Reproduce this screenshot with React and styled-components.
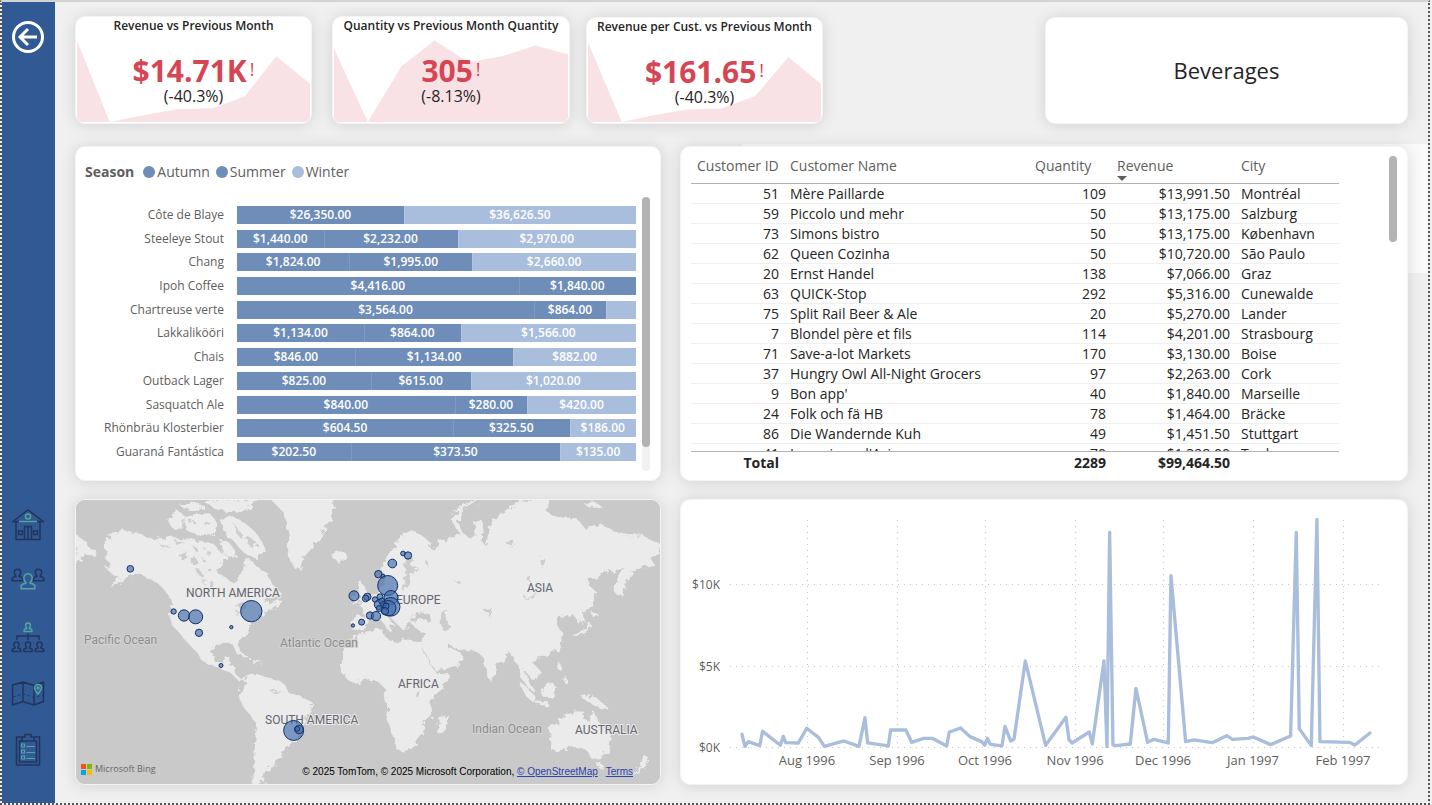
import React from "react";
import styled, { createGlobalStyle } from "styled-components";

const GlobalStyle = createGlobalStyle`
  *, *::before, *::after { box-sizing: border-box; }
  body { margin: 0; background: #f0f0f0; color: #252423; font-family: "Open Sans", "Noto Sans", sans-serif; }
`;

const Page = styled.div`
  display: flex;
  min-height: 100vh;
  border-right: 2px solid #f0f0f0;
`;
const Frame = styled.div`
  display: flex;
  flex: 1;
  min-width: 0;
  border: 2px dotted #555;
  border-top: 2px solid #d3d5d4;
`;
const Sidebar = styled.nav`
  width: 53px;
  flex: none;
  display: flex;
  flex-direction: column;
  justify-content: space-between;
  align-items: center;
  padding: 18px 2px 36px 0;
  background: #315a94;
`;
const NavGroup = styled.div`
  display: flex;
  flex-direction: column;
  gap: 22px;
`;
const IconButton = styled.button`
  display: block;
  width: 34px;
  height: 34px;
  padding: 0;
  border: 0;
  background: none;
  cursor: pointer;
  svg { display: block; width: 34px; height: 34px; }
`;
const Main = styled.main`
  flex: 1;
  min-width: 0;
  display: flex;
  flex-direction: column;
  padding: 14px 20px 18px;
  background: linear-gradient(#fafafa, #fafafa) right 0 top 142px / 50% 129px no-repeat;
`;
const TopRow = styled.section`
  display: grid;
  grid-template-columns: 237fr 20px 238fr 16px 237fr 222fr 363fr;
  height: 108px;
  margin-bottom: 22px;
`;
const Panels = styled.section`
  flex: 1;
  display: grid;
  grid-template-columns: 586fr 728fr;
  grid-template-rows: auto minmax(286px, 1fr);
  gap: 18px 19px;
`;
const Card = styled.article`
  position: relative;
  min-width: 0;
  overflow: hidden;
  background: #fff;
  border: 1px solid #f4f4f4;
  border-radius: 10px;
  box-shadow: 0 1px 16px rgba(0, 0, 0, 0.13);
`;

/* KPI cards */
const KpiCard = styled(Card)`
  grid-column: ${(p) => p.$column};
  margin-top: ${(p) => (p.$low ? "1px" : "0")};
  text-align: center;
`;
const Spark = styled.svg`
  position: absolute;
  inset: 0;
  width: 100%;
  height: 100%;
`;
const KpiBody = styled.div`
  position: relative;
`;
const KpiTitle = styled.h2`
  margin: 0;
  font-size: 12px;
  line-height: 18px;
  font-weight: 600;
  white-space: nowrap;
`;
const KpiValue = styled.div`
  display: flex;
  justify-content: center;
  margin-top: 18px;
  font-size: 30px;
  line-height: 36px;
  font-weight: 700;
  color: #d64554;
`;
const KpiFlag = styled.span`
  margin-left: 3px;
  font-size: 18px;
  line-height: 32px;
  font-weight: 400;
`;
const KpiDelta = styled.div`
  margin-top: -3px;
  font-size: 16px;
  line-height: 20px;
`;
const CategoryCard = styled(Card)`
  grid-column: 7;
  margin-top: 1px;
  padding-bottom: 2px;
  display: flex;
  align-items: center;
  justify-content: center;
  font-size: 22px;
  line-height: 32px;
`;

/* Stacked bars */
const BarCard = styled(Card)`
  padding: 14px 10px 9px 9px;
`;
const Legend = styled.ul`
  display: flex;
  align-items: center;
  gap: 6px;
  margin: 0 0 14px;
  padding: 0;
  list-style: none;
  font-size: 14px;
  line-height: 22px;
  color: #605e5c;
`;
const LegendTitle = styled.li`
  font-weight: 700;
  margin-right: 3px;
`;
const LegendItem = styled.li`
  display: flex;
  align-items: center;
  gap: 2px;
  &::before {
    content: "";
    width: 12px;
    height: 12px;
    border-radius: 50%;
    background: ${(p) => p.$color};
  }
`;
const BarBody = styled.div`
  display: flex;
  gap: 6px;
  height: 274px;
`;
const BarList = styled.div`
  flex: 1;
  min-width: 0;
  display: flex;
  flex-direction: column;
  justify-content: space-between;
  padding: 9px 0 10px;
`;
const BarRow = styled.div`
  display: flex;
  gap: 13px;
  height: 18px;
  line-height: 18px;
`;
const BarLabel = styled.span`
  width: 139px;
  flex: none;
  text-align: right;
  font-size: 12px;
  white-space: nowrap;
  color: #605e5c;
`;
const BarTrack = styled.div`
  flex: 1;
  min-width: 0;
  display: flex;
`;
const Segment = styled.span`
  flex-basis: 0;
  min-width: 0;
  overflow: hidden;
  text-align: center;
  font-size: 12px;
  font-weight: 600;
  color: #fff;
  background: ${(p) => p.$color};
  & + & { box-shadow: inset 1px 0 0 rgba(255, 255, 255, 0.12); }
`;
const ScrollTrack = styled.div`
  width: 8px;
  flex: none;
  border-radius: 4px;
  background: ${(p) => (p.$plain ? "transparent" : "#f2f2f2")};
`;
const ScrollThumb = styled.div`
  height: ${(p) => p.$size}px;
  border-radius: 4px;
  background: #b3b3b3;
`;

/* Table */
const TableCard = styled(Card)`
  display: flex;
  gap: 50px;
  padding: 9px 10px 6px;
`;
const TableArea = styled.div`
  flex: 1;
  min-width: 0;
`;
const TableView = styled.div`
  height: 295px;
  overflow: hidden;
`;
const Table = styled.table`
  width: 100%;
  table-layout: fixed;
  border-collapse: separate;
  border-spacing: 0;
  font-size: 14px;
  line-height: 19px;
  white-space: nowrap;
`;
const Col = styled.col`
  width: ${(p) => p.$width};
`;
const HeadCell = styled.th`
  position: relative;
  height: 28px;
  padding: 0 5px 0 6px;
  vertical-align: top;
  text-align: left;
  font-weight: 400;
  color: #605e5c;
  border-bottom: 1px solid #b3b3b3;
  &[aria-sort]::after {
    content: "";
    position: absolute;
    left: 6px;
    top: 20px;
    border: 5px solid transparent;
    border-top-color: #605e5c;
    border-bottom: 0;
  }
`;
const Cell = styled.td`
  height: 20px;
  padding: 1px 5px 0 6px;
  line-height: 18px;
  text-align: ${(p) => (p.$num ? "right" : "left")};
  border-bottom: 1px solid #f0f0f0;
`;
const FootCell = styled.td`
  height: 23px;
  padding: 0 5px 2px 6px;
  text-align: right;
  font-weight: 700;
  border-top: 1px solid #b3b3b3;
`;

/* Map */
const MapCard = styled(Card)`
  background: #c9c9c9;
`;
const Drawing = styled.svg`
  position: absolute;
  inset: 0;
  width: 100%;
  height: 100%;
`;
const MapLabel = styled.text`
  font: 12px Roboto, sans-serif;
  fill: ${(p) => (p.$ocean ? "#8c8c8c" : "#65656f")};
  stroke: ${(p) => (p.$ocean ? "#d3d3d3" : "#ebebeb")};
  stroke-width: 2px;
  paint-order: stroke;
`;
const MapFooter = styled.footer`
  position: absolute;
  left: 5px;
  right: 27px;
  bottom: 5px;
  display: flex;
  align-items: flex-end;
  justify-content: space-between;
`;
const Bing = styled.span`
  display: flex;
  align-items: center;
  gap: 3px;
  font-size: 9px;
  line-height: 20px;
  color: #666;
`;
const Credits = styled.span`
  font: 10px/14px "Liberation Sans", Arial, sans-serif;
  color: #000;
  a { color: #2b43a8; }
  a + a { margin-left: 8px; }
`;

/* Line chart */
const Axis = styled.text`
  font: ${(p) => (p.$small ? "12px" : "13px")} "Open Sans", sans-serif;
  fill: #605e5c;
  text-anchor: ${(p) => p.$anchor};
`;

const dark = "#6f8db9";
const light = "#a9bddc";

const kpis = [
  { title: "Revenue vs Previous Month", value: "$14.71K", delta: "(-40.3%)", column: 1, spark: "1,24 34,107 68,100 102,94 138,93 170,81 202,40 236,68" },
  { title: "Quantity vs Previous Month Quantity", value: "305", delta: "(-8.13%)", column: 3, spark: "1,32 35,107 69,50 102,24 136,46 170,40 203,29 236,38" },
  { title: "Revenue per Cust. vs Previous Month", value: "$161.65", delta: "(-40.3%)", column: 5, low: true, spark: "1,25 35,107 67,100 101,94 136,93 170,80 203,40 236,68" },
];

const bars = [
  ["Côte de Blaye", 26350, 0, 36626.5],
  ["Steeleye Stout", 1440, 2232, 2970],
  ["Chang", 1824, 1995, 2660],
  ["Ipoh Coffee", 4416, 1840, 0],
  ["Chartreuse verte", 3564, 864, 360],
  ["Lakkalikööri", 1134, 864, 1566],
  ["Chais", 846, 1134, 882],
  ["Outback Lager", 825, 615, 1020],
  ["Sasquatch Ale", 840, 280, 420],
  ["Rhönbräu Klosterbier", 604.5, 325.5, 186],
  ["Guaraná Fantástica", 202.5, 373.5, 135],
];

const customers = [
  [51, "Mère Paillarde", 109, 13991.5, "Montréal"],
  [59, "Piccolo und mehr", 50, 13175, "Salzburg"],
  [73, "Simons bistro", 50, 13175, "København"],
  [62, "Queen Cozinha", 50, 10720, "São Paulo"],
  [20, "Ernst Handel", 138, 7066, "Graz"],
  [63, "QUICK-Stop", 292, 5316, "Cunewalde"],
  [75, "Split Rail Beer & Ale", 20, 5270, "Lander"],
  [7, "Blondel père et fils", 114, 4201, "Strasbourg"],
  [71, "Save-a-lot Markets", 170, 3130, "Boise"],
  [37, "Hungry Owl All-Night Grocers", 97, 2263, "Cork"],
  [9, "Bon app'", 40, 1840, "Marseille"],
  [24, "Folk och fä HB", 78, 1464, "Bräcke"],
  [86, "Die Wandernde Kuh", 49, 1451.5, "Stuttgart"],
  [41, "La maison d'Asie", 70, 1328, "Toulouse"],
];

const money = (n) => "$" + n.toLocaleString("en-US", { minimumFractionDigits: 2, maximumFractionDigits: 2 });

/* Land outlines, drawn at three times the map's size */
const westLand = [
  "105,160 130,135 165,125 205,132 250,150 275,150 300,140 330,155 360,150 400,160 430,165 450,190 470,200 445,225 443,255 465,265 490,285 505,275 520,250 525,215 545,215 560,235 590,250 605,285 630,310 620,320 590,322 575,335 600,340 635,335 620,350 590,360 575,372 560,390 540,405 530,425 520,440 500,455 505,470 510,490 500,488 490,462 465,460 440,462 428,475 426,500 435,520 455,522 470,505 480,505 475,530 495,535 495,555 510,568 530,562 525,572 505,570 485,550 465,540 445,532 420,525 395,510 385,490 365,470 345,448 330,430 312,410 300,385 305,365 310,345 300,320 285,300 270,285 240,265 215,255 195,250 170,262 150,275 125,290 150,262 125,250 108,235 125,222 105,205 120,190 103,175",
  "300,95 305,72 325,68 342,80 338,105 312,118",
  "345,85 380,75 425,80 440,105 425,135 390,135 350,120",
  "455,95 480,80 520,100 545,120 570,150 585,180 560,205 535,195 515,180 490,150 470,140",
  "330,45 360,38 400,48 380,60 345,58",
  "410,42 440,32 500,32 560,34 535,55 500,68 450,62",
  "450,150 480,165 500,195 480,200 455,185",
  "605,30 798,30 785,60 790,80 770,110 745,150 720,180 700,200 688,235 675,235 660,210 655,170 660,140 650,100 635,60",
  "790,200 805,190 828,192 825,205 805,215 793,208",
  "530,560 545,555 580,562 600,570 625,575 645,590 655,612 690,622 725,640 722,660 705,680 700,710 690,735 665,755 650,770 635,800 615,810 610,830 585,840 580,860 570,890 550,890 550,850 555,800 558,750 560,700 545,680 525,655 510,630 515,610 530,590",
  "18,140 45,155 60,180 80,185 75,200 45,190 30,215 18,225",
  "500,490 515,492 532,502 520,500",
  "545,514 570,514 565,521 548,520",
];
const eastLand = [
  "-10,440 20,428 60,420 70,425 72,440 90,455 120,460 130,450 160,455 180,458 185,480 200,510 215,535 230,555 265,555 262,570 235,610 215,630 210,650 212,680 190,705 188,730 165,760 140,782 115,782 105,755 95,720 80,685 85,650 70,615 75,595 60,580 45,570 20,568 0,572 -10,580 -30,575 -48,555 -55,530 -50,500 -40,475 -22,455",
  "260,675 262,690 248,728 235,730 232,705 245,690",
  "-22,418 -20,385 15,383 10,355 0,348 30,335 45,320 60,310 62,290 75,285 72,258 65,235 80,215 95,190 110,160 130,135 160,125 185,140 215,165 210,180 225,185 240,155 270,150 300,130 285,110 275,90 300,50 350,35 310,60 290,95 305,130 330,150 345,140 345,100 360,90 370,120 365,160 380,175 385,140 400,90 430,70 470,40 520,25 560,25 560,70 600,85 650,90 680,125 720,105 750,120 800,140 850,140 900,165 900,195 870,200 880,225 850,230 820,245 800,270 790,300 775,320 765,300 775,265 800,235 760,240 720,255 690,270 680,285 705,305 700,345 680,360 665,370 672,395 655,400 645,375 620,375 600,385 585,400 605,430 600,470 580,490 545,500 525,505 515,520 540,545 535,565 515,570 500,545 490,540 500,575 520,600 510,600 490,570 480,530 465,515 450,480 430,505 410,530 405,560 392,572 380,540 370,500 350,485 310,480 285,475 260,455 255,470 300,490 305,500 290,525 235,545 225,540 200,495 180,460 195,440 195,425 165,415 155,400 170,390 215,395 210,370 185,365 160,375 145,400 130,420 110,400 90,380 75,375 100,405 85,420 65,390 45,385 20,395 5,420",
  "0,275 10,290 20,310 35,330 30,345 0,345 5,325 -5,300",
  "-22,320 -5,315 -8,335 -25,338",
  "480,580 500,595 525,625 520,635 500,620",
  "528,638 565,640 565,646 530,644",
  "545,600 575,580 585,590 575,620 550,620",
  "665,622 700,622 725,640 738,652 715,650 690,640",
  "595,520 602,525 605,545 598,540",
  "610,570 620,565 618,580",
  "690,400 695,415 660,430 640,440 650,430 680,420",
  "700,370 715,375 700,385",
  "565,715 600,700 610,685 630,680 645,668 670,668 668,690 690,700 698,665 710,690 720,705 745,730 752,750 740,785 715,805 690,800 680,780 660,770 630,772 600,780 578,785 575,750",
  "710,820 725,822 718,835",
  "850,800 868,810 850,835 820,855 835,835",
  "675,42 700,38 720,50 690,55",
];
const westWater = [
  "490,345 520,340 535,350 515,358",
  "500,362 510,365 500,385",
  "440,180 455,175 465,190",
  "365,165 385,180 380,190",
  "315,155 345,160 320,170",
  "270,165 300,172 280,178",
  "330,190 350,186 345,200 325,205",
  "360,205 372,200 385,222 370,228",
  "395,205 410,215 400,222",
  "405,178 425,188 410,195",
  "375,235 388,240 398,262 385,255",
  "410,232 425,240 418,250",
  "400,268 412,275 405,290",
  "420,270 432,280 425,305",
  "355,90 380,98 360,105",
  "400,92 425,100 405,112",
  "490,100 512,130 515,150 495,125",
  "535,140 560,160 545,175 530,160",
  "640,602 610,612 600,604",
];
const eastWater = [
  "120,300 130,275 138,250 132,225 145,200 160,205 152,232 180,238 150,252 150,285",
  "240,365 262,360 255,385 270,410 262,430 245,420 248,395",
  "540,215 552,205 560,220 548,235",
  "375,365 395,355 385,380",
  "165,610 182,605 178,625 168,622",
  "490,330 525,310 535,305 515,325",
  "435,160 460,150 455,170",
  "195,215 210,220 205,235",
  "285,275 300,268 298,285",
  "495,268 515,262 510,275",
];

const westPins = [[181, 238, 10], [311, 366, 8], [342, 378, 17], [377, 382, 21], [387, 430, 11], [544, 365, 32], [484, 413, 5], [453, 528, 6], [671, 723, 30], [687, 720, 13], [682, 718, 7], [852, 319, 15], [849, 408, 5], [875, 398, 9]];
const eastPins = [[129, 192, 7], [144, 198, 11], [97, 222, 13], [55, 254, 11], [69, 260, 6], [83, 288, 30], [22, 322, 11], [17, 327, 10], [93, 324, 21], [92, 352, 28], [85, 356, 23], [58, 345, 15], [30, 378, 11], [48, 380, 14], [45, 330, 8], [60, 322, 9], [65, 335, 9], [70, 345, 9], [58, 357, 9], [78, 350, 9], [75, 365, 11]];

const westPlace = "translate(70 490) scale(0.3333)";
const eastPlace = "translate(360 490) scale(0.3333)";

const Shapes = ({ list }) => list.map((points) => <polygon key={points} points={points} />);
const Pins = ({ list }) => list.map(([x, y, r]) => <circle key={`${x}-${y}`} cx={x} cy={y} r={r} />);

function WorldMap() {
  return (
    <Drawing viewBox="76 500 584 285" preserveAspectRatio="xMidYMid slice" role="img" aria-label="Revenue by city">
      <defs>
        <filter id="coast" x="0" y="0" width="100%" height="100%">
          <feTurbulence type="fractalNoise" baseFrequency="0.16" numOctaves="3" seed="4" result="noise" />
          <feDisplacementMap in="SourceGraphic" in2="noise" scale="9" />
        </filter>
      </defs>
      <g filter="url(#coast)">
        <rect x="60" y="480" width="620" height="320" fill="#c9c9c9" />
        <g fill="#ebebeb" stroke="#ebebeb" strokeWidth="4" strokeLinejoin="round">
          <g transform={westPlace}><Shapes list={westLand} /></g>
          <g transform={eastPlace}><Shapes list={eastLand} /></g>
        </g>
        <g fill="#cdcdcd">
          <g transform={westPlace}><Shapes list={westWater} /></g>
          <g transform={eastPlace}><Shapes list={eastWater} /></g>
        </g>
      </g>
      <MapLabel x="186" y="597">NORTH AMERICA</MapLabel>
      <MapLabel x="265" y="724">SOUTH AMERICA</MapLabel>
      <MapLabel x="396" y="604">EUROPE</MapLabel>
      <MapLabel x="527" y="592">ASIA</MapLabel>
      <MapLabel x="398" y="688">AFRICA</MapLabel>
      <MapLabel x="575" y="734">AUSTRALIA</MapLabel>
      <MapLabel $ocean x="84" y="644">Pacific Ocean</MapLabel>
      <MapLabel $ocean x="280" y="647">Atlantic Ocean</MapLabel>
      <MapLabel $ocean x="472" y="733">Indian Ocean</MapLabel>
      <g fill="#3f6cac" fillOpacity="0.65" stroke="#142f66" strokeWidth="3">
        <g transform={westPlace}><Pins list={westPins} /></g>
        <g transform={eastPlace}><Pins list={eastPins} /></g>
      </g>
    </Drawing>
  );
}

const linePoints =
  "186,733 195,769 205,755 239,767 248,724 301,766 310,739 317,758 355,759 380,715 416,743 433,769 492,753 537,769 555,683 563,759 625,768 632,720 678,720 695,757 731,745 757,745 800,768 808,726 842,714 870,740 905,755 914,766 922,745 931,763 966,768 975,709 992,753 1002,748 1036,513 1097,766 1158,682 1167,749 1176,759 1228,726 1237,762 1272,513 1281,770 1289,127 1299,765 1308,767 1351,762 1368,595 1403,757 1422,748 1465,759 1473,257 1517,755 1542,750 1597,758 1640,737 1658,748 1705,745 1720,741 1772,764 1832,738 1849,127 1858,716 1894,767 1911,88 1920,755 2008,757 2025,765 2070,729";
const months = [[807, "Aug 1996"], [897, "Sep 1996"], [985, "Oct 1996"], [1075, "Nov 1996"], [1163, "Dec 1996"], [1253, "Jan 1997"], [1343, "Feb 1997"]];
const levels = [[584, "$10K"], [666, "$5K"], [747, "$0K"]];

function RevenueLine() {
  return (
    <Drawing viewBox="681 500 726 284" role="img" aria-label="Revenue by date">
      <g stroke="#c8c8c8" strokeDasharray="1 5" fill="none">
        {months.map(([x]) => <path key={x} d={`M${x}.5 520V748`} />)}
        {levels.map(([y]) => <path key={y} d={`M730 ${y}.5H1379`} />)}
      </g>
      {levels.map(([y, label]) => <Axis key={label} $small $anchor="end" x="720" y={y + 5}>{label}</Axis>)}
      {months.map(([x, label]) => <Axis key={label} $anchor="middle" x={x} y="765">{label}</Axis>)}
      <polyline transform="translate(680 490) scale(0.3333)" points={linePoints} fill="none" stroke="#a9bddc" strokeWidth="10" strokeLinejoin="round" strokeLinecap="round" />
    </Drawing>
  );
}

const navy = "#22345c";
const teal = "#55a5a0";
const Person = ({ x, y, s = 1, color }) => (
  <path
    transform={`translate(${x} ${y}) scale(${s})`}
    d="M0 -6a4 4.200 0 0 1 4 4.200c0 1.800-.8 3.200-2 4v1c2.600.4 4.600 1.200 4.600 3.200v2H-6.600v-2c0-2 2-2.800 4.600-3.200v-1c-1.200-.8-2-2.200-2-4A4 4.200 0 0 1 0-6z"
    fill="none"
    stroke={color}
    strokeWidth={1.5 / s}
    strokeLinejoin="round"
  />
);

const navIcons = [
  ["Home", (
    <g fill="none" stroke={navy} strokeWidth="1.5">
      <path d="M2 12.500L17 1 32 12.500zM5 12.500v18h24v-18M13.500 30.500V17.500h7v13M17 17.500v13M7.500 22h4v3.500h-4zM22.500 22h4v3.500h-4z" />
      <g stroke={teal}><circle cx="17" cy="7.500" r="2.500" /><path d="M8 12.500h18" /></g>
    </g>
  )],
  ["Customers", (
    <g>
      <Person x={6.5} y={9} s={0.8} color={navy} />
      <Person x={27.5} y={9} s={0.8} color={navy} />
      <Person x={17} y={15} s={1.05} color={teal} />
    </g>
  )],
  ["Employees", (
    <g>
      <Person x={17} y={5.5} s={0.6} color={teal} />
      <path d="M17 12v7M6 19v-4h22v4" fill="none" stroke={navy} strokeWidth="1.500" />
      <Person x={5.500} y={25} s={0.650} color={navy} />
      <Person x={17} y={25} s={0.650} color={navy} />
      <Person x={28.500} y={25} s={0.650} color={navy} />
    </g>
  )],
  ["Map", (
    <g fill="none" stroke={navy} strokeWidth="1.5" strokeLinejoin="round">
      <path d="M1.500 8L12 5l11 3.500L32.500 5v19.500L23 28l-11-3.500L1.500 28zM12 5v19.500M23 8.500V28" />
      <path d="M2 20l10-3 11 3.500L32 18" strokeDasharray="3 2" strokeWidth="0.800" />
      <path d="M27 17c-2-2.500-3.500-4-3.500-6a3.500 3.500 0 0 1 7 0c0 2-1.500 3.500-3.500 6z" stroke={teal} />
      <circle cx="27" cy="11" r="1" stroke={teal} />
    </g>
  )],
  ["Orders", (
    <g fill="none" stroke={navy} strokeWidth="1.500">
      <path d="M11 4H5.500v28h23V4H23M8.500 8h17v21h-17zM11 8V4h3V1.500h6V4h3v4z" />
      <g stroke={teal} strokeWidth="1.200">
        <path d="M10.500 11h3v3h-3zM10.500 17h3v3h-3zM10.500 23h3v3h-3zM15.500 13.500H24M15.500 19.500H24M15.500 25.500H24" />
      </g>
    </g>
  )],
];

const Columns = () => (
  <colgroup>
    <Col $width="93px" />
    <Col $width="auto" />
    <Col $width="82px" />
    <Col $width="124px" />
    <Col $width="104px" />
  </colgroup>
);

export default function App() {
  return (
    <Page>
      <GlobalStyle />
      <Frame>
        <Sidebar aria-label="Report pages">
          <IconButton aria-label="Back">
            <svg viewBox="0 0 34 34" fill="none" stroke="#fff" strokeWidth="3">
              <circle cx="17" cy="17" r="14.500" />
              <path d="M26 17H9.500M17 9L9 17l8 8" />
            </svg>
          </IconButton>
          <NavGroup>
            {navIcons.map(([name, art]) => (
              <IconButton key={name} aria-label={name}>
                <svg viewBox="0 0 34 34">{art}</svg>
              </IconButton>
            ))}
          </NavGroup>
        </Sidebar>
        <Main>
          <TopRow>
            {kpis.map((k) => (
              <KpiCard key={k.title} $column={k.column} $low={k.low}>
                <Spark viewBox="0 0 237 108" preserveAspectRatio="none" aria-hidden="true">
                  <polygon points={`1,107 ${k.spark} 236,107`} fill="#f9e2e6" />
                </Spark>
                <KpiBody>
                  <KpiTitle>{k.title}</KpiTitle>
                  <KpiValue>{k.value}<KpiFlag>!</KpiFlag></KpiValue>
                  <KpiDelta>{k.delta}</KpiDelta>
                </KpiBody>
              </KpiCard>
            ))}
            <CategoryCard>Beverages</CategoryCard>
          </TopRow>
          <Panels>
            <BarCard>
              <Legend>
                <LegendTitle>Season</LegendTitle>
                <LegendItem $color={dark}>Autumn</LegendItem>
                <LegendItem $color={dark}>Summer</LegendItem>
                <LegendItem $color={light}>Winter</LegendItem>
              </Legend>
              <BarBody>
                <BarList>
                  {bars.map(([name, ...values]) => (
                    <BarRow key={name}>
                      <BarLabel>{name}</BarLabel>
                      <BarTrack>
                        {values.map((v, i) => v > 0 && (
                          <Segment key={i} $color={i === 2 ? light : dark} style={{ flexGrow: v }}>
                            {v === 360 ? "" : money(v)}
                          </Segment>
                        ))}
                      </BarTrack>
                    </BarRow>
                  ))}
                </BarList>
                <ScrollTrack><ScrollThumb $size={250} /></ScrollTrack>
              </BarBody>
            </BarCard>
            <TableCard>
              <TableArea>
                <TableView>
                  <Table>
                    <Columns />
                    <thead>
                      <tr>
                        <HeadCell>Customer ID</HeadCell>
                        <HeadCell>Customer Name</HeadCell>
                        <HeadCell>Quantity</HeadCell>
                        <HeadCell aria-sort="descending">Revenue</HeadCell>
                        <HeadCell>City</HeadCell>
                      </tr>
                    </thead>
                    <tbody>
                      {customers.map(([id, name, qty, revenue, city]) => (
                        <tr key={id}>
                          <Cell $num>{id}</Cell>
                          <Cell>{name}</Cell>
                          <Cell $num>{qty}</Cell>
                          <Cell $num>{money(revenue)}</Cell>
                          <Cell>{city}</Cell>
                        </tr>
                      ))}
                    </tbody>
                  </Table>
                </TableView>
                <Table aria-label="Totals">
                  <Columns />
                  <tbody>
                    <tr>
                      <FootCell>Total</FootCell>
                      <FootCell />
                      <FootCell>2289</FootCell>
                      <FootCell>$99,464.50</FootCell>
                      <FootCell />
                    </tr>
                  </tbody>
                </Table>
              </TableArea>
              <ScrollTrack $plain><ScrollThumb $size={86} /></ScrollTrack>
            </TableCard>
            <MapCard>
              <WorldMap />
              <MapFooter>
                <Bing>
                  <svg width="11" height="11" viewBox="0 0 11 11" aria-hidden="true">
                    <path fill="#f25022" d="M0 0h5v5H0z" />
                    <path fill="#7fba00" d="M6 0h5v5H6z" />
                    <path fill="#00a4ef" d="M0 6h5v5H0z" />
                    <path fill="#ffb900" d="M6 6h5v5H6z" />
                  </svg>
                  Microsoft Bing
                </Bing>
                <Credits>
                  © 2025 TomTom, © 2025 Microsoft Corporation, <a href="#osm">© OpenStreetMap</a>
                  <a href="#terms">Terms</a>
                </Credits>
              </MapFooter>
            </MapCard>
            <Card><RevenueLine /></Card>
          </Panels>
        </Main>
      </Frame>
    </Page>
  );
}
